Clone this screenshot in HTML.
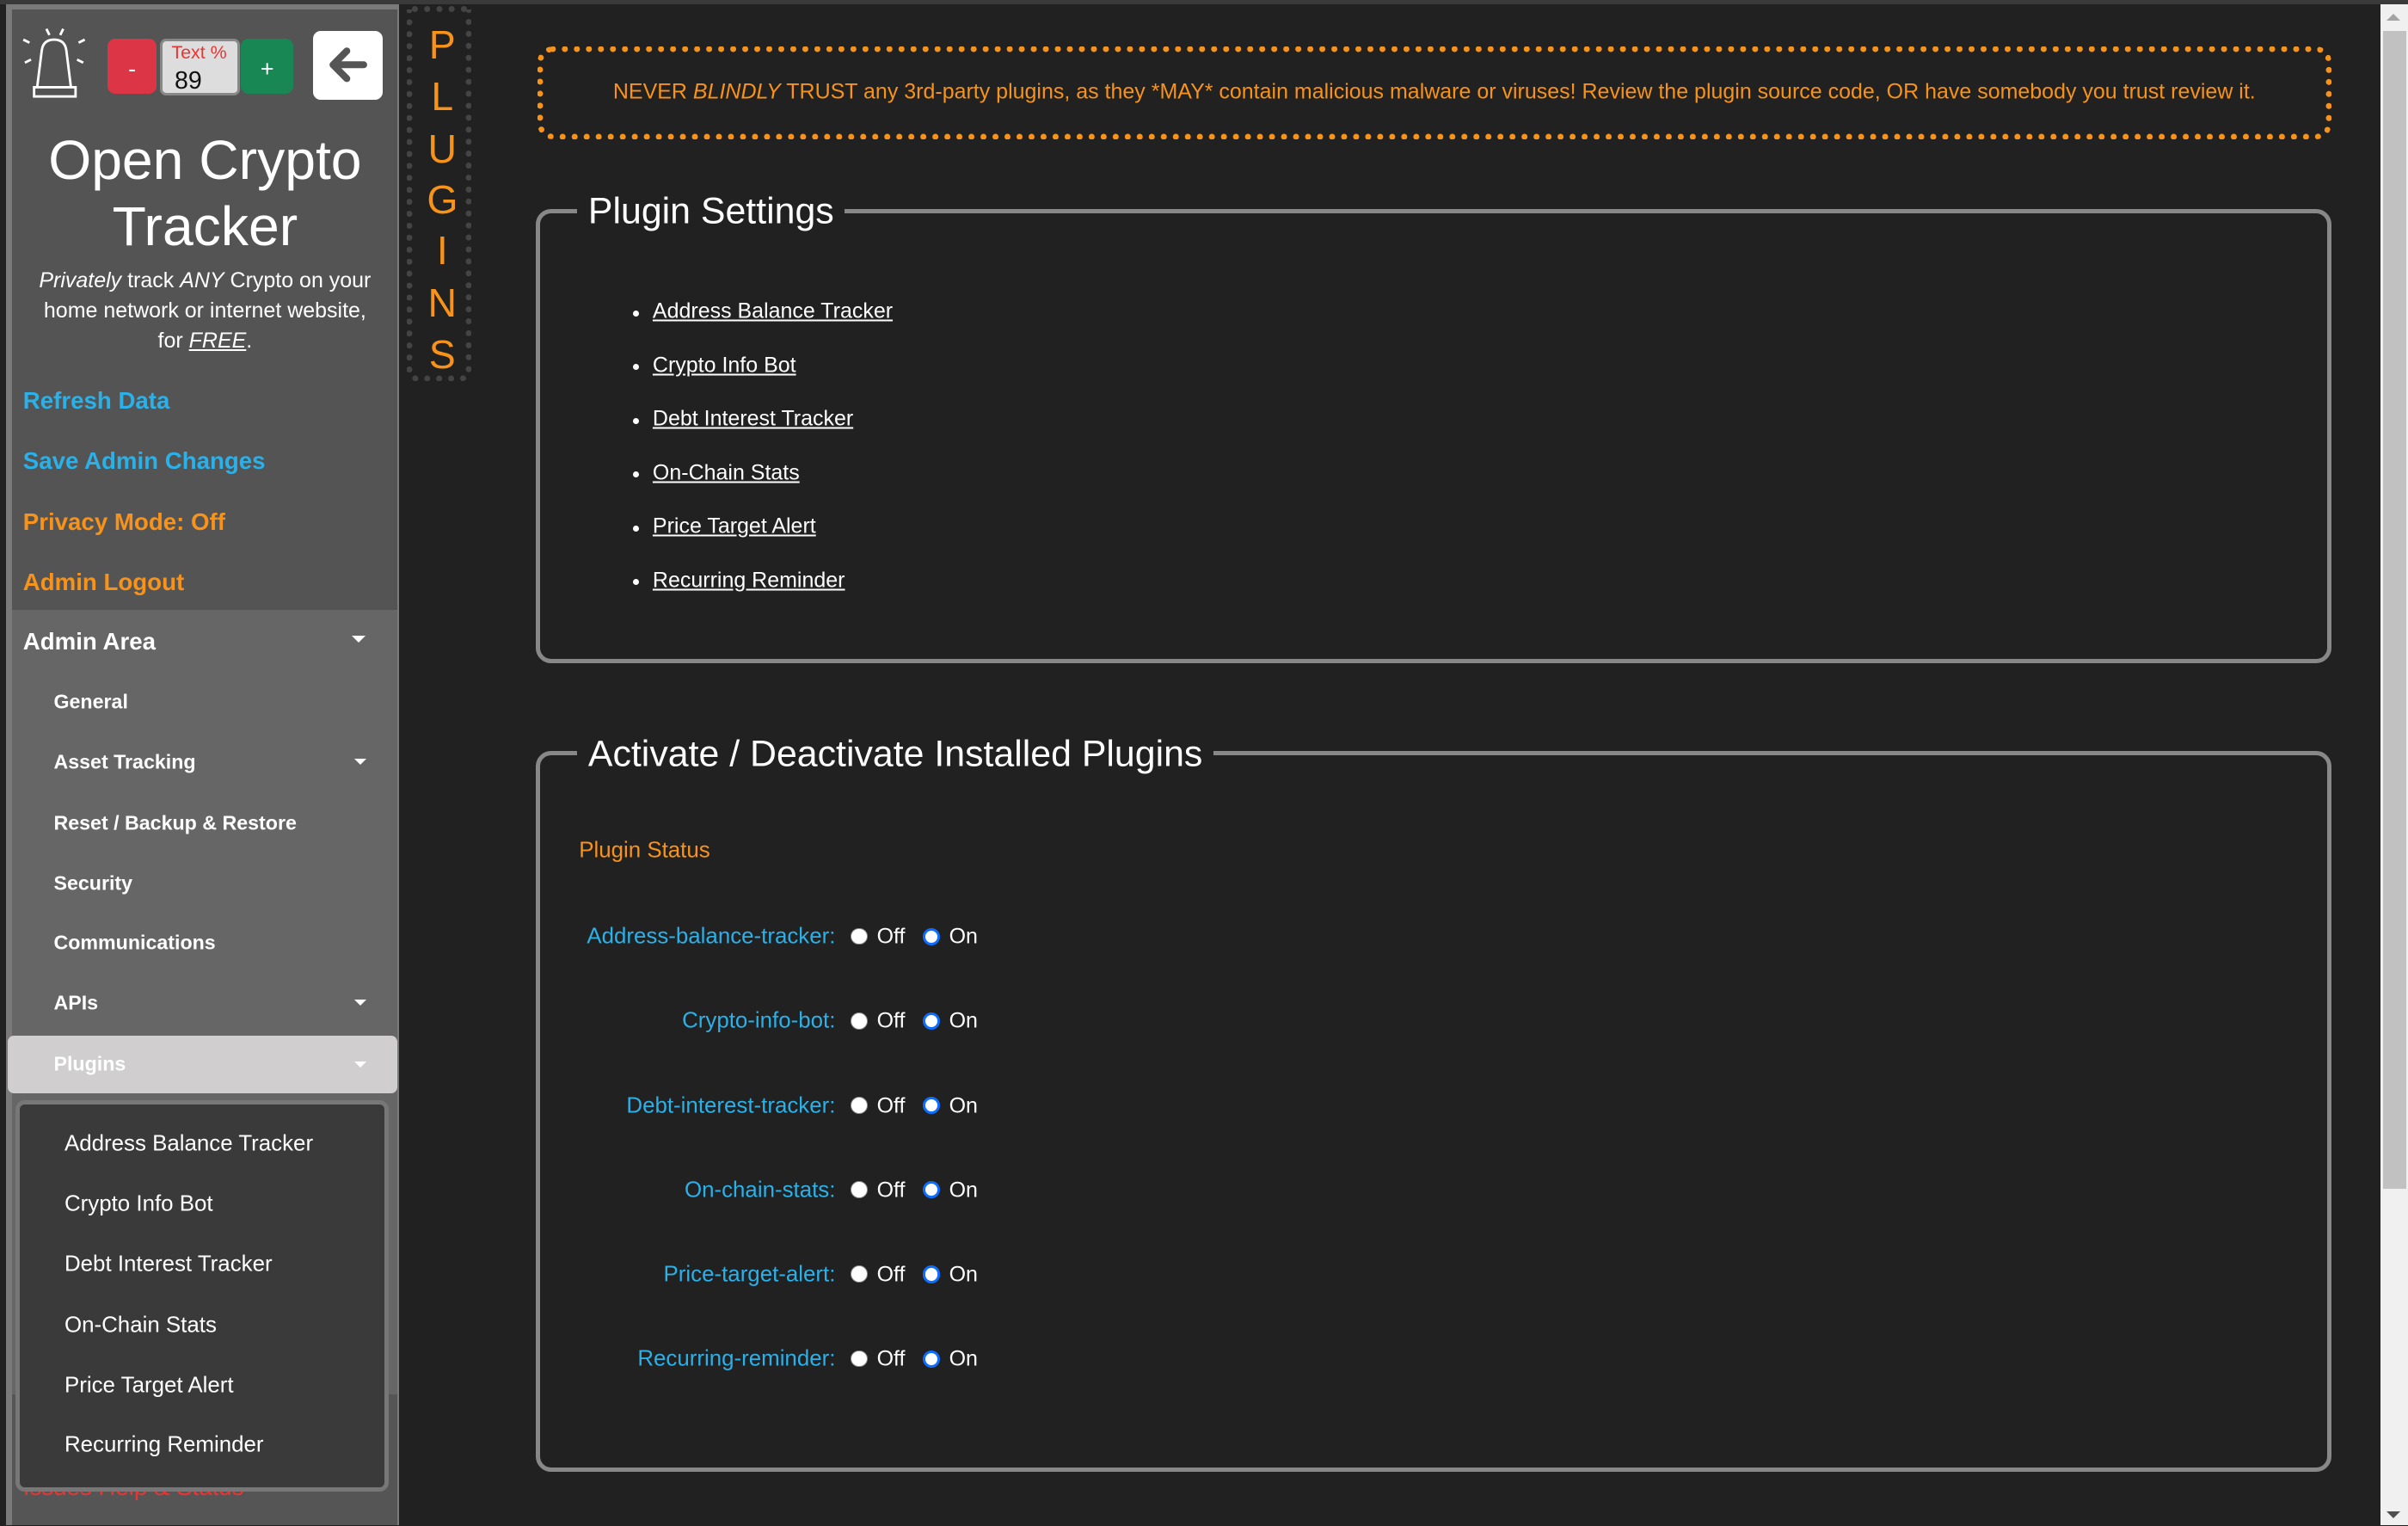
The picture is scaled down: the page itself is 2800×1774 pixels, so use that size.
<!DOCTYPE html>
<html><head><meta charset="utf-8">
<style>
html,body{margin:0;padding:0;background:#212121;width:2800px;height:1774px;overflow:hidden}
#w{zoom:1.7857;width:1568px;height:993px;position:relative;font-family:"Liberation Sans",sans-serif;color:#fff;background:#212121}
.a{position:absolute;white-space:nowrap}
.topbar{left:0;top:0;width:1568px;height:3px;background:#3a3a3a}
.side{left:4px;top:3px;width:256px;height:990px;background:#7a7a7a}
.sp1{left:8px;top:6px;width:251px;height:391px;background:#545454}
.sp2{left:8px;top:397px;width:251px;height:596px;background:#666}
.sp3{left:8px;top:908px;width:251px;height:85px;background:#555}
.btn{border-radius:5px}
.mi{font-size:15.5px;font-weight:bold;transform:translateY(-50%)}
.si{font-size:13px;font-weight:bold;left:35px;transform:translateY(-50%)}
.caret{width:0;height:0;border-left:5px solid transparent;border-right:5px solid transparent;border-top:5px solid #fff}
.dd{font-size:14.5px;left:42px;transform:translateY(-50%)}
.fs{border:3px solid #888;border-radius:10px;box-sizing:border-box}
.lg{background:#212121;padding:0 7px;font-size:24px;transform:translateY(-50%)}
.li{font-size:14px;text-decoration:underline;transform:translateY(-50%)}
.bul{width:4px;height:4px;border-radius:50%;background:#fff}
.lab{font-size:14.5px;color:#2bb0e8;right:1024px;transform:translateY(-50%)}
.r{width:10px;height:10px;border-radius:50%;background:#fff;border:1px solid #888}
.ron{width:8px;height:8px;border-radius:50%;background:#fff;border:2px solid #0d6efd;box-shadow:inset 0 0 0 1px #fff}
.rt{font-size:14px;transform:translateY(-50%)}
.pl{left:278px;width:20px;text-align:center;color:#f7931a;font-size:26px;transform:translateY(-50%)}
</style></head><body><div id="w">
<div class="a topbar"></div>
<div class="a side"></div>
<div class="a sp1"></div>
<div class="a sp2"></div>
<div class="a sp3"></div>

<!-- bell -->
<svg class="a" style="left:11px;top:17px" width="48" height="50" viewBox="0 0 48 50" fill="none" stroke="#fff" stroke-width="1.6">
<path d="M13 40 L16 16 Q17 9 24 9 Q31 9 32 16 L35 40"/>
<rect x="11" y="40" width="27" height="6"/>
<path d="M19 2 L21 6 M30 2 L28 6 M4 9 L8 11 M44 9 L40 11 M5 24 L9 22 M43 24 L39 22"/>
</svg>
<div class="a btn" style="left:70px;top:25px;width:32px;height:36px;background:#dc3545;color:#fff;font-size:15px;text-align:center;line-height:40px">-</div>
<div class="a" style="left:104px;top:25px;width:52px;height:37px;background:#ddd;border:2px solid #888;border-radius:4px;box-sizing:border-box">
<div class="a" style="left:6px;top:1px;font-size:12px;color:#e33">Text %</div>
<div class="a" style="left:8px;top:17px;font-size:16px;color:#111">89</div></div>
<div class="a btn" style="left:157px;top:25px;width:34px;height:36px;background:#198754;color:#fff;font-size:15px;text-align:center;line-height:40px">+</div>
<div class="a btn" style="left:204px;top:20px;width:45px;height:45px;background:#fff">
<svg width="45" height="45" viewBox="0 0 45 45"><path d="M33 22 H14 M22 13 L13 22 L22 31" stroke="#555" stroke-width="4.5" fill="none" stroke-linecap="round" stroke-linejoin="round"/></svg></div>

<div class="a" style="left:8px;width:251px;top:83px;text-align:center;font-size:36px;line-height:43px">Open Crypto<br>Tracker</div>
<div class="a" style="left:8px;width:251px;top:173px;text-align:center;font-size:14px;line-height:19.5px;white-space:normal"><i>Privately</i> track <i>ANY</i> Crypto on your<br>home network or internet website,<br>for <i><u>FREE</u></i>.</div>

<div class="a mi" style="left:15px;top:261px;color:#2bb0e8">Refresh Data</div>
<div class="a mi" style="left:15px;top:300px;color:#2bb0e8">Save Admin Changes</div>
<div class="a mi" style="left:15px;top:340px;color:#f7931a">Privacy Mode: Off</div>
<div class="a mi" style="left:15px;top:379px;color:#f7931a">Admin Logout</div>
<div class="a mi" style="left:15px;top:418px;color:#fff">Admin Area</div>
<div class="a caret" style="left:229px;top:414px"></div>
<div class="a si" style="top:457px">General</div>
<div class="a si" style="top:496px">Asset Tracking</div>
<div class="a caret" style="left:231px;top:494px;border-width:4px 4px 0"></div>
<div class="a si" style="top:536px">Reset / Backup &amp; Restore</div>
<div class="a si" style="top:575px">Security</div>
<div class="a si" style="top:614px">Communications</div>
<div class="a si" style="top:653px">APIs</div>
<div class="a caret" style="left:231px;top:651px;border-width:4px 4px 0"></div>
<div class="a" style="left:5px;top:674px;width:254px;height:38px;background:#d0cecf;border-radius:4px"></div>
<div class="a si" style="top:693px">Plugins</div>
<div class="a caret" style="left:231px;top:691px;border-width:4px 4px 0"></div>
<div class="a mi" style="left:15px;top:968px;color:#e33;font-weight:normal">Issues Help &amp; Status</div>
<div class="a" style="left:10px;top:716px;width:243px;height:255px;background:#3a3a3a;border:3px solid #777;border-radius:6px;box-sizing:border-box"></div>
<div class="a dd" style="top:745px">Address Balance Tracker</div>
<div class="a dd" style="top:784px">Crypto Info Bot</div>
<div class="a dd" style="top:823px">Debt Interest Tracker</div>
<div class="a dd" style="top:863px">On-Chain Stats</div>
<div class="a dd" style="top:902px">Price Target Alert</div>
<div class="a dd" style="top:941px">Recurring Reminder</div>

<!-- PLUGINS column -->
<div class="a" style="left:265px;top:6px;width:42px;height:242px;border:4px dotted #444;border-top:none;border-radius:0 0 6px 6px;box-sizing:border-box"></div>
<div class="a" style="left:268px;top:4px;width:36px;height:4px;border-top:4px dotted #444"></div>
<div class="a pl" style="top:29px">P</div>
<div class="a pl" style="top:63px">L</div>
<div class="a pl" style="top:97px">U</div>
<div class="a pl" style="top:130px">G</div>
<div class="a pl" style="top:163px">I</div>
<div class="a pl" style="top:197px">N</div>
<div class="a pl" style="top:231px">S</div>

<!-- warning -->
<div class="a" style="left:350px;top:30px;width:1168px;height:61px;border:4px dotted #f7931a;border-radius:10px;box-sizing:border-box"></div>
<div class="a" style="left:350px;width:1168px;top:60px;transform:translateY(-50%);text-align:center;color:#f7931a;font-size:14px">NEVER <i>BLINDLY</i> TRUST any 3rd-party plugins, as they *MAY* contain malicious malware or viruses! Review the plugin source code, OR have somebody you trust review it.</div>

<!-- fieldset 1 -->
<div class="a fs" style="left:349px;top:136px;width:1169px;height:296px"></div>
<div class="a lg" style="left:376px;top:138px">Plugin Settings</div>
<div class="a bul" style="left:412px;top:202px"></div><div class="a li" style="left:425px;top:203px">Address Balance Tracker</div>
<div class="a bul" style="left:412px;top:237px"></div><div class="a li" style="left:425px;top:238px">Crypto Info Bot</div>
<div class="a bul" style="left:412px;top:272px"></div><div class="a li" style="left:425px;top:273px">Debt Interest Tracker</div>
<div class="a bul" style="left:412px;top:307px"></div><div class="a li" style="left:425px;top:308px">On-Chain Stats</div>
<div class="a bul" style="left:412px;top:342px"></div><div class="a li" style="left:425px;top:343px">Price Target Alert</div>
<div class="a bul" style="left:412px;top:377px"></div><div class="a li" style="left:425px;top:378px">Recurring Reminder</div>

<!-- fieldset 2 -->
<div class="a fs" style="left:349px;top:489px;width:1169px;height:469px"></div>
<div class="a lg" style="left:376px;top:491px">Activate / Deactivate Installed Plugins</div>
<div class="a" style="left:377px;top:554px;transform:translateY(-50%);color:#f7931a;font-size:14.5px">Plugin Status</div>

<div class="a lab" style="top:610px">Address-balance-tracker:</div>
<div class="a lab" style="top:665px">Crypto-info-bot:</div>
<div class="a lab" style="top:720px">Debt-interest-tracker:</div>
<div class="a lab" style="top:775px">On-chain-stats:</div>
<div class="a lab" style="top:830px">Price-target-alert:</div>
<div class="a lab" style="top:885px">Recurring-reminder:</div>

<div class="a r" style="left:554px;top:604px"></div><div class="a rt" style="left:571px;top:610px">Off</div><div class="a ron" style="left:601px;top:604px"></div><div class="a rt" style="left:618px;top:610px">On</div>
<div class="a r" style="left:554px;top:659px"></div><div class="a rt" style="left:571px;top:665px">Off</div><div class="a ron" style="left:601px;top:659px"></div><div class="a rt" style="left:618px;top:665px">On</div>
<div class="a r" style="left:554px;top:714px"></div><div class="a rt" style="left:571px;top:720px">Off</div><div class="a ron" style="left:601px;top:714px"></div><div class="a rt" style="left:618px;top:720px">On</div>
<div class="a r" style="left:554px;top:769px"></div><div class="a rt" style="left:571px;top:775px">Off</div><div class="a ron" style="left:601px;top:769px"></div><div class="a rt" style="left:618px;top:775px">On</div>
<div class="a r" style="left:554px;top:824px"></div><div class="a rt" style="left:571px;top:830px">Off</div><div class="a ron" style="left:601px;top:824px"></div><div class="a rt" style="left:618px;top:830px">On</div>
<div class="a r" style="left:554px;top:879px"></div><div class="a rt" style="left:571px;top:885px">Off</div><div class="a ron" style="left:601px;top:879px"></div><div class="a rt" style="left:618px;top:885px">On</div>

<!-- scrollbar -->
<div class="a" style="left:1550px;top:3px;width:18px;height:990px;background:#f0f0f0"></div>
<div class="a" style="left:1552px;top:20px;width:15px;height:754px;background:#c1c1c1"></div>
<div class="a" style="left:1554px;top:9px;width:0;height:0;border-left:5px solid transparent;border-right:5px solid transparent;border-bottom:5px solid #a3a3a3"></div>
<div class="a" style="left:1554px;top:984px;width:0;height:0;border-left:5px solid transparent;border-right:5px solid transparent;border-top:5px solid #505050"></div>
</div></body></html>
